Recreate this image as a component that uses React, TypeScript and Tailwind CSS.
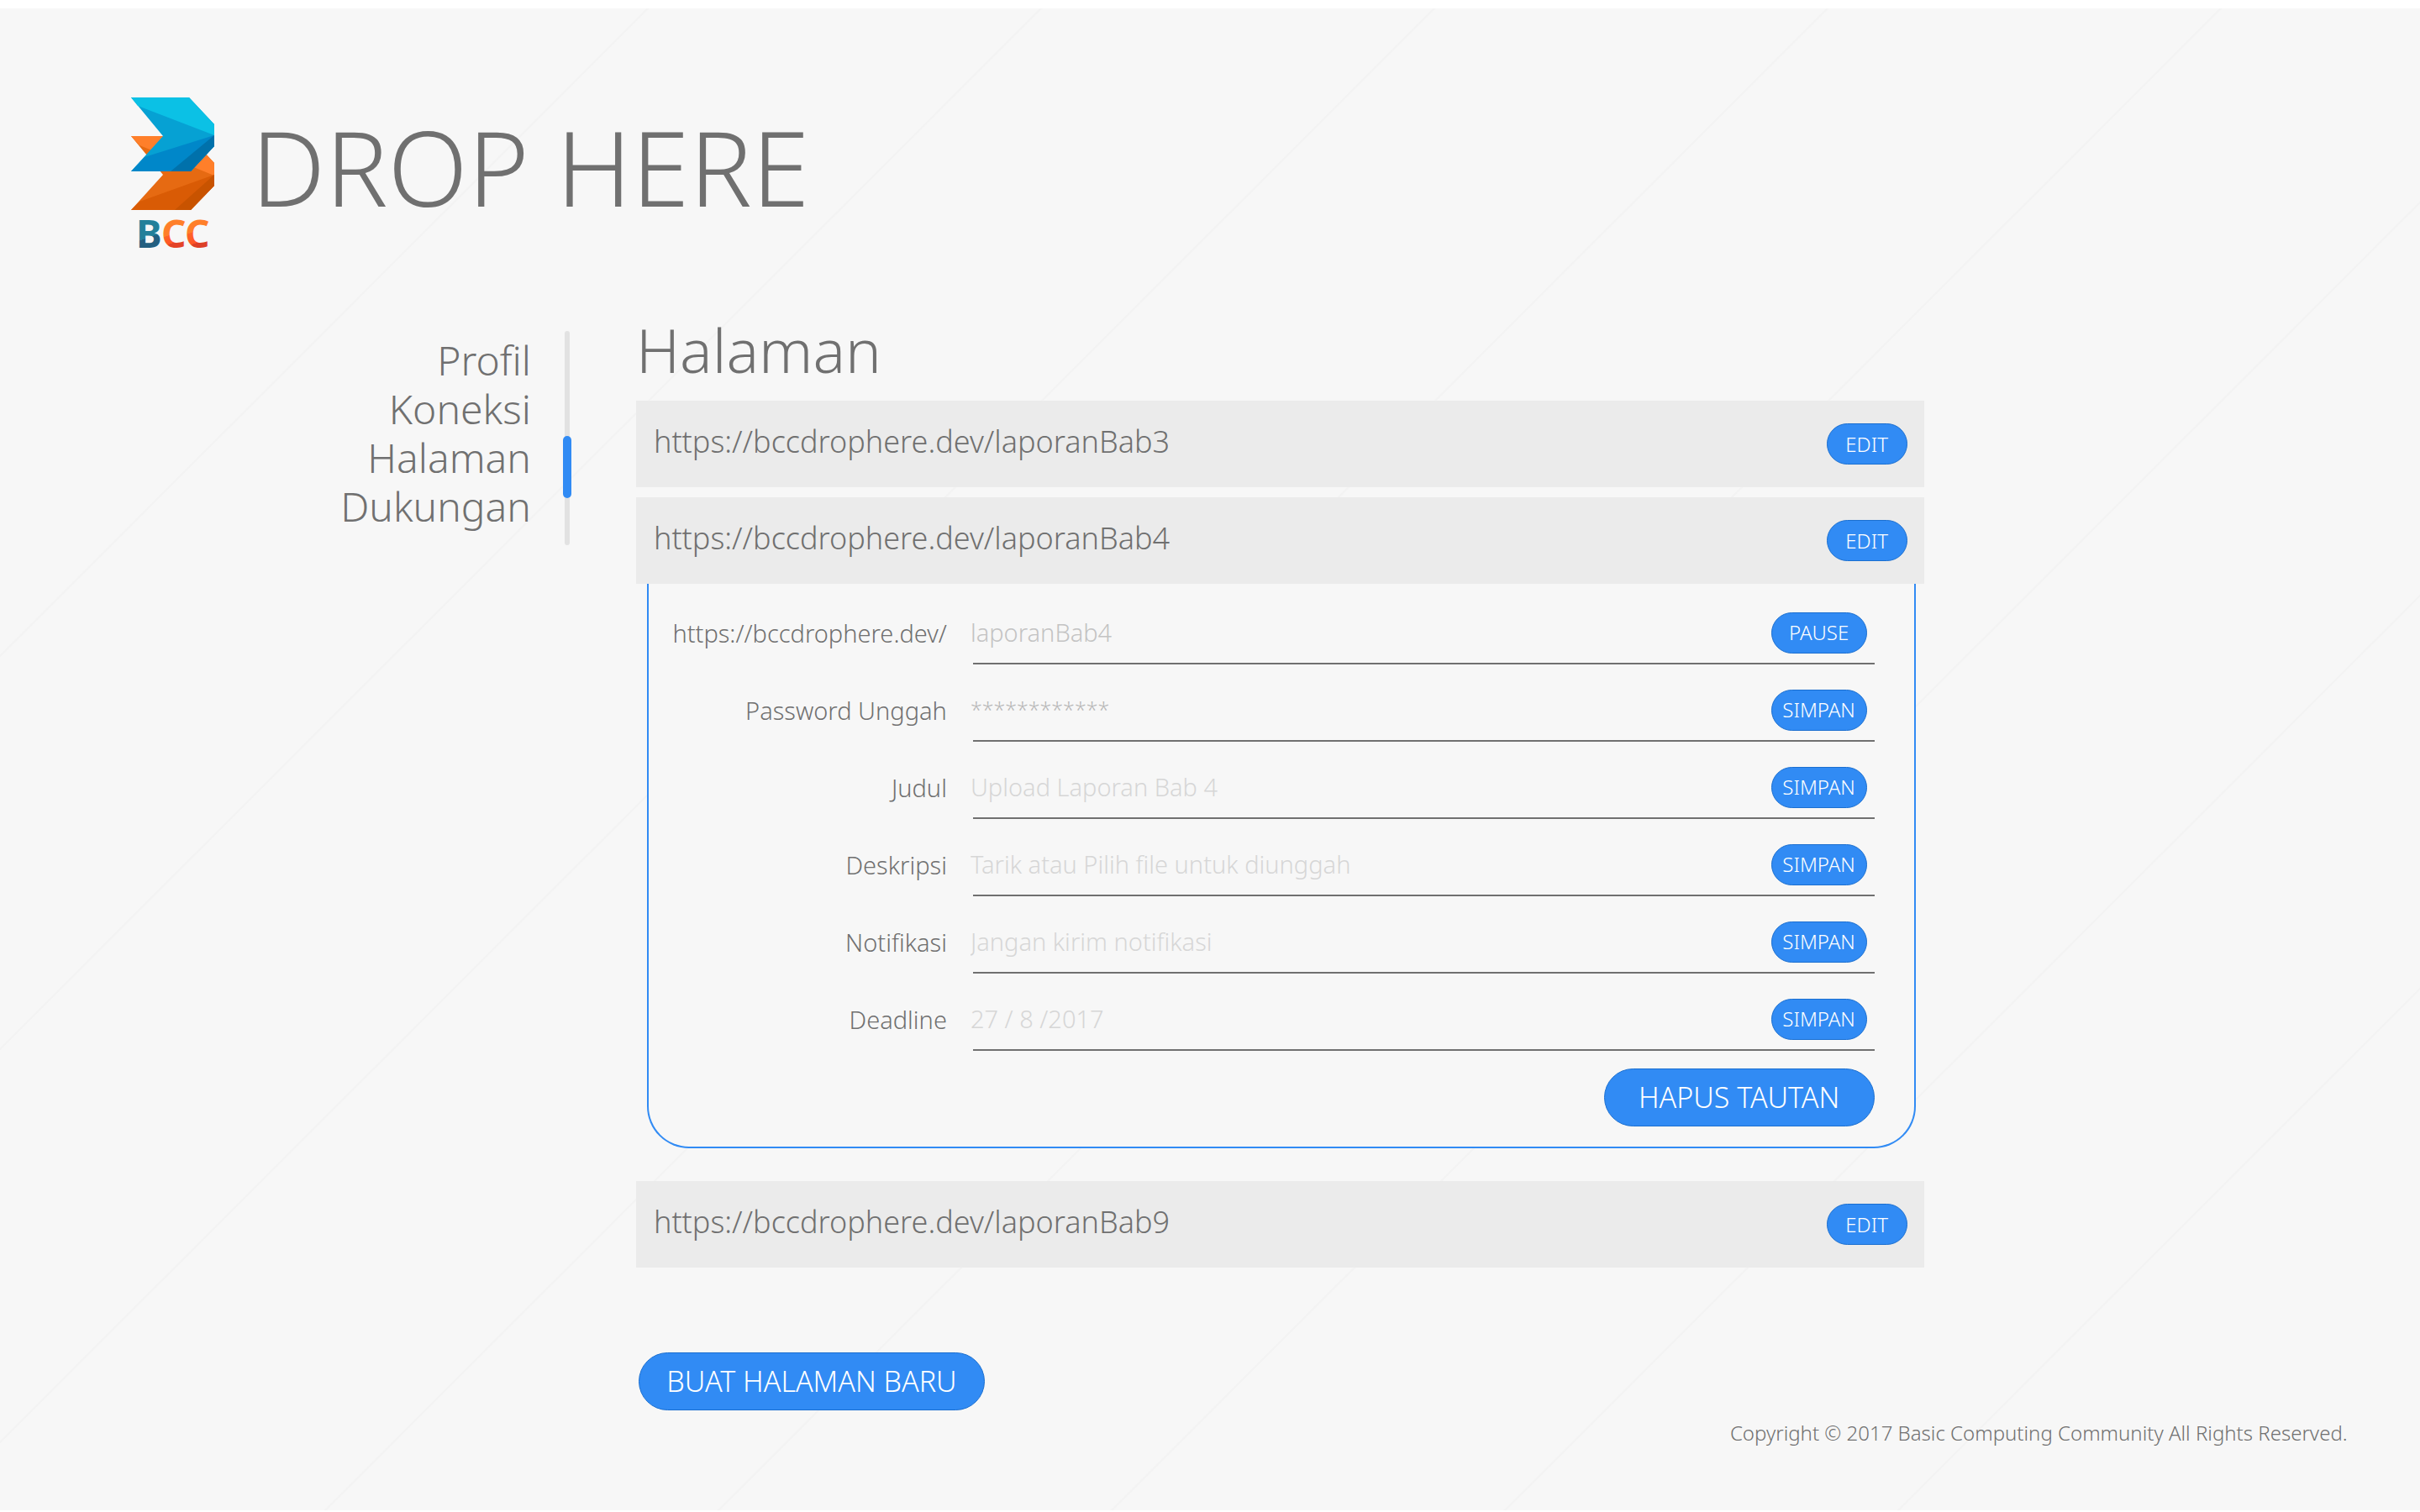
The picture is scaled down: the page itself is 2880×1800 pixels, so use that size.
import React from 'react';

type Field = {
  id: string;
  label: string;
  type: string;
  placeholder: string;
  style: string;
  action: string;
};

const strongStyle = 'text-[29px] placeholder:text-[#c3c3c3]';
const maskStyle = 'text-[25px] placeholder:text-[#b8b8b8]';
const softStyle = 'text-[29px] placeholder:text-[#d6d6d6]';

const fields: Field[] = [
  { id: 'tautan', label: 'https://bccdrophere.dev/', type: 'text', placeholder: 'laporanBab4', style: strongStyle, action: 'PAUSE' },
  { id: 'password', label: 'Password Unggah', type: 'password', placeholder: '************', style: maskStyle, action: 'SIMPAN' },
  { id: 'judul', label: 'Judul', type: 'text', placeholder: 'Upload Laporan Bab 4', style: softStyle, action: 'SIMPAN' },
  { id: 'deskripsi', label: 'Deskripsi', type: 'text', placeholder: 'Tarik atau Pilih file untuk diunggah', style: softStyle, action: 'SIMPAN' },
  { id: 'notifikasi', label: 'Notifikasi', type: 'text', placeholder: 'Jangan kirim notifikasi', style: softStyle, action: 'SIMPAN' },
  { id: 'deadline', label: 'Deadline', type: 'text', placeholder: '27 / 8 /2017', style: softStyle, action: 'SIMPAN' },
];

const navItems = ['Profil', 'Koneksi', 'Halaman', 'Dukungan'];
const stripes = [781, 1249, 1717, 2185, 2653, 3121, 3589, 4057];

function Backdrop() {
  return (
    <svg className="pointer-events-none absolute -top-[10px] left-0 h-[1800px] w-full" aria-hidden="true">
      {stripes.map((x) => (
        <line key={x} x1={x} y1={0} x2={x - 1800} y2={1800} stroke="#f3f3f3" strokeWidth={2} />
      ))}
    </svg>
  );
}

function Logo() {
  return (
    <svg viewBox="0 0 100 200" className="h-[200px] w-[100px] shrink-0" role="img" aria-label="BCC">
      <defs>
        <linearGradient id="teal" gradientUnits="userSpaceOnUse" x1="20" y1="146" x2="32" y2="180">
          <stop offset="0.55" stopColor="#23809a" />
          <stop offset="0.55" stopColor="#245f80" />
        </linearGradient>
        <linearGradient id="ember1" gradientUnits="userSpaceOnUse" x1="44" y1="148" x2="56" y2="180">
          <stop offset="0.45" stopColor="#ff7f2a" />
          <stop offset="0.45" stopColor="#ff6528" />
          <stop offset="0.75" stopColor="#ff5526" />
          <stop offset="0.75" stopColor="#e34328" />
        </linearGradient>
        <linearGradient id="ember2" gradientUnits="userSpaceOnUse" x1="72" y1="148" x2="84" y2="180">
          <stop offset="0.35" stopColor="#ff7f2a" />
          <stop offset="0.35" stopColor="#ff6528" />
          <stop offset="0.75" stopColor="#ff5526" />
          <stop offset="0.75" stopColor="#dd4028" />
        </linearGradient>
      </defs>
      <polygon points="0,46 69,46 99,78 99,105 71,134 0,134 38,92" fill="#e66a12" />
      <polygon points="0,46 69,46 99,78 99,93 10,57" fill="#ff7f2a" />
      <polygon points="99,92 99,105 71,134 0,134 10,124" fill="#d95b05" />
      <polygon points="99,92 99,105 71,134 52,134" fill="#c85300" />
      <polygon points="0,0 69,0 99,32 99,58 71,88 0,88 38,46" fill="#06a1d3" />
      <polygon points="0,0 69,0 99,32 99,45 8,10" fill="#0bc1e5" />
      <polygon points="99,45 99,58 71,88 0,88 16,71" fill="#0087c9" />
      <polygon points="99,45 99,58 71,88 47,88" fill="#0071ab" />
      <g className="font-['Noto_Sans',sans-serif] text-[46px] font-bold">
        <text x="6" y="179" fill="url(#teal)">B</text>
        <text x="36" y="179" fill="url(#ember1)">C</text>
        <text x="64" y="179" fill="url(#ember2)">C</text>
      </g>
    </svg>
  );
}

function SmallButton({ children, width }: { children: string; width: string }) {
  return (
    <button
      type="button"
      className={`${width} h-[49px] shrink-0 rounded-full border border-[#1b6fd0] bg-[#318bf4] text-2xl font-light text-white`}
    >
      {children}
    </button>
  );
}

function BigButton({ children, width }: { children: string; width: string }) {
  return (
    <button
      type="button"
      className={`${width} h-[69px] shrink-0 rounded-full border border-[#1b6fd0] bg-[#318bf4] text-[34px] font-light text-white`}
    >
      {children}
    </button>
  );
}

function PageRow({ url }: { url: string }) {
  return (
    <div className="flex h-[103px] items-center justify-between bg-[#ebebeb] pl-[21px] pr-5">
      <span className="pb-[6px] text-4xl">{url}</span>
      <SmallButton width="w-24">EDIT</SmallButton>
    </div>
  );
}

function FieldRow({ field }: { field: Field }) {
  return (
    <div className="flex h-[92px] gap-[31px]">
      <label htmlFor={field.id} className="flex w-[355px] shrink-0 items-center justify-end pt-[18px] text-[29px]">
        {field.label}
      </label>
      <div className="flex flex-1 items-center border-b-2 border-[#707070] pr-[9px] pt-[18px]">
        <input
          id={field.id}
          type={field.type}
          placeholder={field.placeholder}
          className={`-ml-[3px] min-w-0 flex-1 bg-transparent font-light outline-none placeholder:opacity-100 ${field.style}`}
        />
        <SmallButton width="w-[114px]">{field.action}</SmallButton>
      </div>
    </div>
  );
}

export default function App() {
  return (
    <div className="relative flex min-h-screen flex-col overflow-hidden border-b-2 border-t-[10px] border-b-white border-t-white bg-[#f7f7f7] font-['Noto_Sans',sans-serif] font-light text-[#707070]">
      <Backdrop />
      <header className="relative flex gap-[43px] pl-[156px] pt-[106px]">
        <Logo />
        <h1 className="mt-5 text-[124px] leading-[124px]">DROP HERE</h1>
      </header>

      <div className="relative mt-[60px] flex pr-[20.5%]">
        <nav className="mt-6 flex w-[27.6%] shrink-0 flex-col items-end text-5xl leading-[58px]">
          {navItems.map((item) => (
            <a key={item} href={`#${item.toLowerCase()}`} aria-current={item === 'Halaman' ? 'page' : undefined}>
              {item}
            </a>
          ))}
        </nav>
        <div className="relative ml-[38px] mr-[77px] mt-[18px] flex h-[255px] w-[10px] shrink-0 justify-center" aria-hidden="true">
          <div className="h-full w-[6px] rounded-full bg-[#e2e2e2]" />
          <div className="absolute left-0 top-[125px] h-[74px] w-[10px] rounded-full bg-[#318bf4]" />
        </div>

        <main className="min-w-0 flex-1">
          <h2 className="mb-[21px] text-[72px] leading-20">Halaman</h2>
          <div className="flex flex-col gap-3">
            <PageRow url="https://bccdrophere.dev/laporanBab3" />
            <PageRow url="https://bccdrophere.dev/laporanBab4" />
          </div>
          <form className="ml-[13px] mr-[10px] flex flex-col rounded-b-[50px] border-x-2 border-b-2 border-[#318bf4] bg-[#f7f7f7] pb-6 pr-[47px] pt-1">
            {fields.map((field) => (
              <FieldRow key={field.id} field={field} />
            ))}
            <div className="mt-[21px] flex justify-end">
              <BigButton width="w-[322px]">HAPUS TAUTAN</BigButton>
            </div>
          </form>
          <div className="mt-[39px]">
            <PageRow url="https://bccdrophere.dev/laporanBab9" />
          </div>
          <div className="ml-[3px] mt-[101px]">
            <BigButton width="w-[412px]">BUAT HALAMAN BARU</BigButton>
          </div>
        </main>
      </div>

      <footer className="relative mt-[11px] pr-[3%] text-right text-2xl leading-8">
        Copyright © 2017 Basic Computing Community All Rights Reserved.
      </footer>
    </div>
  );
}
